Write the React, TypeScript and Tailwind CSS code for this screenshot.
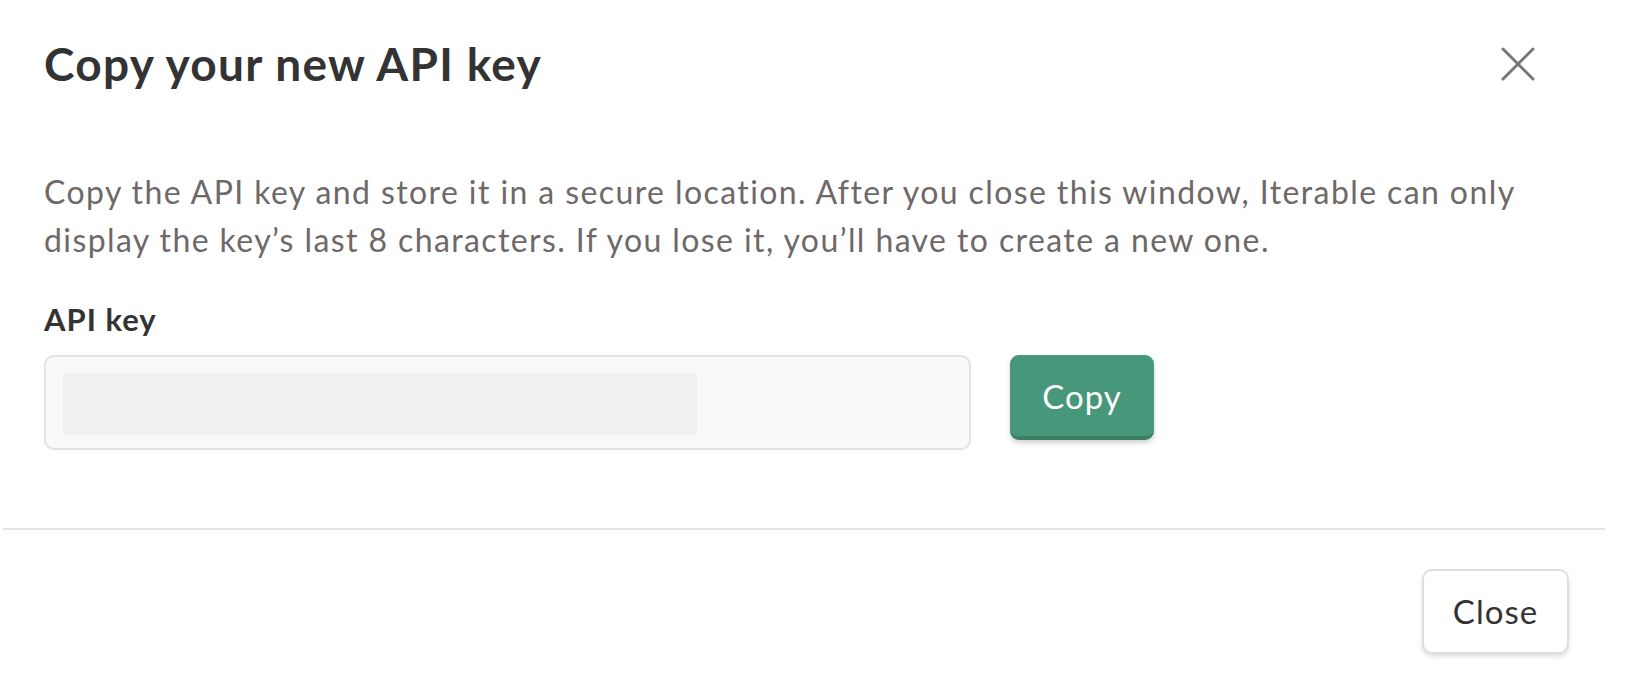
import React from 'react';

function CloseIcon() {
  return (
    <svg width="34" height="34" viewBox="0 0 34 34" fill="none">
      <path d="M2 2L32 32M32 2L2 32" stroke="#777777" strokeWidth="3" strokeLinecap="round" />
    </svg>
  );
}

export default function App() {
  return (
    <div className="w-[1634px] h-[684px] bg-white overflow-hidden font-['Lato',sans-serif]">
      {/* header */}
      <div className="flex items-center justify-between h-[128px] pl-[44px] pr-[99px]">
        <h2 className="text-[46px] font-bold tracking-[1.3px] text-[#333333] leading-none">Copy your new API key</h2>
        <button className="flex items-center justify-center">
          <CloseIcon />
        </button>
      </div>

      {/* body */}
      <div className="pl-[44px] pt-[40px]">
        <p className="text-[32px] leading-[48px] tracking-[1.4px] text-[#6e6868] whitespace-nowrap">
          Copy the API key and store it in a secure location. After you close this window, Iterable can only
          <br />
          display the key’s last 8 characters. If you lose it, you’ll have to create a new one.
        </p>
        <div className="mt-[35px] text-[31px] leading-[40px] tracking-[1px] font-bold text-[#333333]">API key</div>
        <div className="mt-[16px] flex items-start gap-[39px]">
          <div className="w-[927px] h-[95px] rounded-[10px] border-2 border-[#e2e2e2] bg-[#f9f9f9] pl-[17px] pt-[16px]">
            <div className="w-[634px] h-[62px] bg-[#f0f0f0]" />
          </div>
          <button className="w-[144px] h-[85px] rounded-[9px] bg-[#47977a] border-b-[4px] border-[#3a7f66] shadow-[0_3px_5px_rgba(0,0,0,0.18)] text-white text-[33px] tracking-[1px] leading-none pt-[2px]">
            Copy
          </button>
        </div>
      </div>

      {/* footer */}
      <div className="mt-[78px] ml-[3px] w-[1602px] h-[2px] bg-[#e3e3e3]" />
      <div className="flex justify-end pr-[65px] pt-[39px]">
        <button className="w-[147px] h-[85px] rounded-[10px] border-2 border-[#dedede] bg-white shadow-[0_3px_4px_rgba(0,0,0,0.12)] text-[33px] tracking-[1px] text-[#333333] leading-none">
          Close
        </button>
      </div>
    </div>
  );
}
